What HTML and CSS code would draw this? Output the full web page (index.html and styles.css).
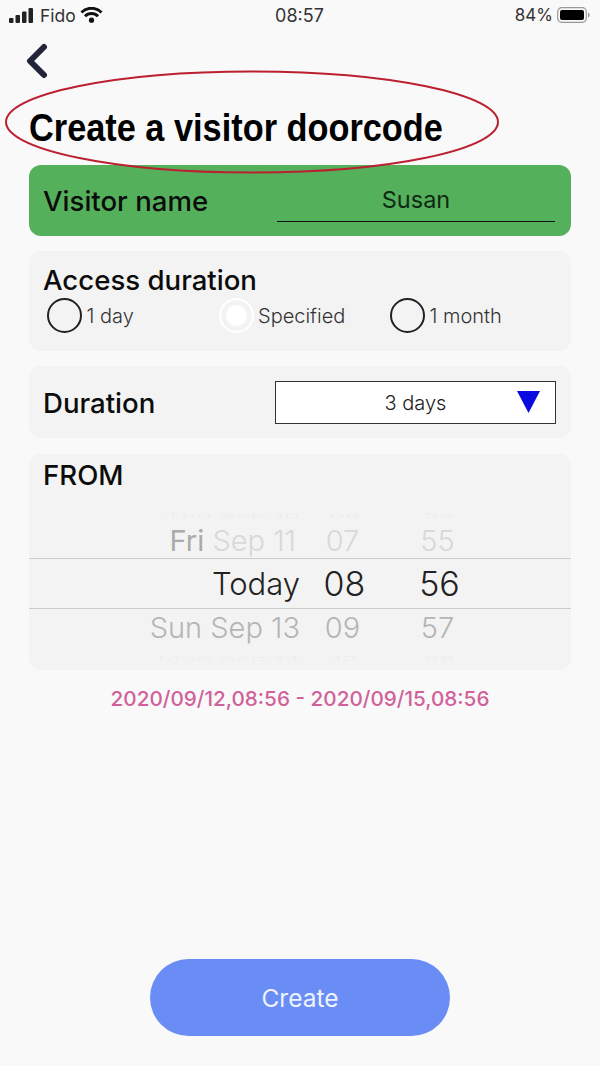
FILE: index.html
```html
<!DOCTYPE html>
<html lang="en">

<head>
  <meta charset="UTF-8" />
  <meta name="viewport" content="width=device-width, initial-scale=1.0" />
  <title>Create a visitor doorcode</title>
  <link rel="stylesheet" href="styles.css">
</head>

<body>
  <div class="page">
    <!-- status bar -->
    <div class="status">
      <div class="status-left">
        <svg class="signal" width="25" height="15" viewBox="0 0 25 15">
          <rect x="0" y="10" width="4.5" height="5" rx="1" />
          <rect x="6.5" y="7" width="4.5" height="8" rx="1" />
          <rect x="13" y="3.5" width="4.5" height="11.5" rx="1" />
          <rect x="19.5" y="0" width="4.5" height="15" rx="1" />
        </svg>
        <span class="carrier">Fido</span>
        <svg class="wifi" width="23" height="16" viewBox="0 0 23 16">
          <path d="M1.500 5.500a14 14 0 0 1 20 0" />
          <path d="M5 9.200a9 9 0 0 1 13 0" />
          <circle cx="11.500" cy="13.200" r="2.600" />
        </svg>
      </div>
      <div class="time">08:57</div>
      <div class="status-right">
        <span>84%</span>
        <svg width="33" height="16" viewBox="0 0 33 16">
          <rect x="0.700" y="0.700" width="28.600" height="14.600" rx="4" class="batt-frame" />
          <rect x="3" y="3" width="24" height="10" rx="2" class="batt-fill" />
          <path d="M31 5.500c1.200.4 1.600 1.200 1.600 2.500s-.4 2.100-1.600 2.500z" class="batt-tip" />
        </svg>
      </div>
    </div>

    <div class="back">
      <svg width="24" height="36" viewBox="0 0 24 36">
        <path d="M20 4 L6 18 L20 32" />
      </svg>
    </div>

    <h1 class="title">Create a visitor doorcode</h1>

    <div class="card card-green">
      <span class="label">Visitor name</span>
      <div class="name-input">Susan</div>
    </div>

    <div class="card card-access">
      <div class="label">Access duration</div>
      <div class="radios">
        <div class="radio"><span class="dot"></span>1 day</div>
        <div class="radio"><span class="dot dot-on"></span>Specified</div>
        <div class="radio"><span class="dot"></span>1 month</div>
      </div>
    </div>

    <div class="card card-duration">
      <span class="label">Duration</span>
      <div class="select">
        <span>3 days</span>
        <svg class="arrow" width="23" height="22" viewBox="0 0 23 22">
          <path d="M0 0H23L11.500 22Z" />
        </svg>
      </div>
    </div>

    <div class="card card-from">
      <div class="label">FROM</div>
      <div class="picker">
        <div class="row row-edge"><span class="c-date">Thu Sep 10</span><span class="c-num">06</span><span class="c-num">54</span></div>
        <div class="row row-far"><span class="c-date"><b>Fri</b> Sep 11</span><span class="c-num">07</span><span class="c-num">55</span></div>
        <div class="row row-now"><span class="c-date">Today</span><span class="c-num">08</span><span class="c-num">56</span></div>
        <div class="row row-near"><span class="c-date">Sun Sep 13</span><span class="c-num">09</span><span class="c-num">57</span></div>
        <div class="row row-edge row-edge-low"><span class="c-date">Mon Sep 14</span><span class="c-num">10</span><span class="c-num">58</span></div>
      </div>
    </div>

    <p class="range">2020/09/12,08:56 - 2020/09/15,08:56</p>

    <button class="create">Create</button>

    <!-- red marker drawn over the screenshot -->
    <svg class="marker" width="500" height="108" viewBox="0 0 500 108">
      <ellipse cx="249" cy="54" rx="246" ry="50.500" />
    </svg>
  </div>
</body>

</html>
```

FILE: styles.css
```css
* {
  margin: 0;
  padding: 0;
  box-sizing: border-box;
}

body {
  background: #f9f9f9;
  font-family: Inter, "Liberation Sans", sans-serif;
  color: #111;
}

.page {
  position: relative;
  width: 600px;
  height: 1066px;
  padding: 0 29px;
  display: flex;
  flex-direction: column;
  overflow: hidden;
}

.status {
  display: grid;
  grid-template-columns: 1fr auto 1fr;
  align-items: center;
  height: 30px;
  margin: 0 -29px;
  padding: 0 10px 0 9px;
  font-size: 17.500px;
  color: #333;
}

.status-left {
  display: flex;
  align-items: center;
}

.signal {
  fill: #222;
}

.carrier {
  margin-left: 6px;
}

.wifi {
  margin-left: 4px;
  fill: #111;
}

.wifi path {
  fill: none;
  stroke: #111;
  stroke-width: 3;
}

.time {
  font-size: 18px;
}

.status-right {
  display: flex;
  justify-content: flex-end;
  align-items: center;
  gap: 4px;
  font-size: 17px;
}

.batt-frame {
  fill: none;
  stroke: #999;
  stroke-width: 1.200;
}

.batt-fill {
  fill: #000;
}

.batt-tip {
  fill: #999;
}

.back {
  height: 36px;
  margin: 13px 0 0 -5px;
}

.back path {
  fill: none;
  stroke: #22243a;
  stroke-width: 6;
  stroke-linecap: round;
  stroke-linejoin: round;
}

/* no condensed bold installed, so squeeze the Arial-width one */
.title {
  margin-top: 26px;
  font-family: "Liberation Sans", sans-serif;
  font-size: 39px;
  line-height: 46px;
  font-weight: bold;
  color: #000;
  white-space: nowrap;
  transform: scaleX(0.88);
  transform-origin: left center;
}

.card {
  background: #f3f3f3;
  border-radius: 12px;
  padding: 0 15px;
}

.label {
  font-size: 27.600px;
  font-weight: 500;
  margin-left: -1px;
  color: #0c0c0c;
}

.card-green {
  display: flex;
  align-items: center;
  justify-content: space-between;
  height: 71px;
  margin-top: 14px;
  padding-right: 16px;
  background: #55b05c;
}

.name-input {
  width: 278px;
  height: 40px;
  margin-top: 3px;
  border-bottom: 1.500px solid #111;
  text-align: center;
  font-size: 23.500px;
  line-height: 36px;
  color: #0e2a12;
}

.card-access {
  height: 100px;
  margin-top: 15px;
  padding-top: 13px;
}

.card-access .label {
  line-height: 32px;
}

.radios {
  display: flex;
  margin-top: 2px;
  padding-left: 3px;
}

.radio {
  flex: 0 0 171.500px;
  display: flex;
  align-items: center;
  gap: 4.500px;
  font-size: 20px;
  font-weight: 300;
  color: #333;
}

.dot {
  width: 35px;
  height: 35px;
  border: 2px solid #222;
  border-radius: 50%;
}

.dot-on {
  border: 2px solid #fff;
  background: #fff;
  box-shadow: inset 0 0 0 5px #f3f3f3;
}

.card-duration {
  display: flex;
  align-items: center;
  justify-content: space-between;
  height: 72px;
  margin-top: 15px;
}

.card-duration .label {
  padding-top: 1px;
}

.select {
  display: flex;
  align-items: center;
  justify-content: center;
  position: relative;
  width: 281px;
  height: 43px;
  padding-top: 2px;
  background: #fff;
  border: 1.500px solid #333;
  font-size: 20px;
  font-weight: 300;
  color: #222;
}

/* sits over the box, text stays centred */
.arrow {
  position: absolute;
  right: 15px;
  top: 9px;
  fill: #0a0ae0;
}

.card-from {
  height: 216px;
  margin-top: 16px;
  padding: 0;
  overflow: hidden;
}

.card-from .label {
  padding: 4px 15px 0;
  line-height: 34px;
}

.picker {
  height: 178px;
}

.row {
  display: grid;
  grid-template-columns: 271px 82px 108px;
  align-items: center;
  font-weight: 300;
}

.c-date {
  text-align: right;
}

.c-num {
  text-align: center;
  padding-left: 7px;
}

.row-edge {
  height: 16px;
  margin-top: 14px;
  font-size: 26px;
  color: #ddd;
  opacity: 0.25;
  transform: scaleY(0.25);
}

.row-far {
  height: 36px;
  font-size: 29px;
  color: #d8d8d8;
}

.row-far .c-date {
  padding-right: 4px;
}

.row-far .c-num {
  padding-left: 3px;
}

.row-far b {
  font-weight: 400;
  color: #aaa;
}

.row-now {
  height: 51px;
  border-top: 1px solid #ccc;
  border-bottom: 1px solid #ccc;
  font-size: 34px;
  color: #222;
}

.row-now .c-date {
  font-size: 31px;
}

.row-near {
  height: 36px;
  font-size: 29px;
  color: #b5b5b5;
}

.row-near .c-num {
  padding-left: 3px;
}

.row-edge-low {
  margin-top: 4px;
}

.range {
  margin-top: 17px;
  text-align: center;
  font-size: 20.700px;
  font-weight: 500;
  line-height: 24px;
  color: #d0619b;
}

.create {
  width: 300px;
  height: 77px;
  margin: auto auto 30px;
  border: none;
  border-radius: 39px;
  background: #6a8df5;
  color: #eef2ff;
  font: 400 24.500px Inter, "Liberation Sans", sans-serif;
}

.marker {
  position: absolute;
  left: 3px;
  top: 68px;
  fill: none;
  stroke: #bb2030;
  stroke-width: 2;
}
```
